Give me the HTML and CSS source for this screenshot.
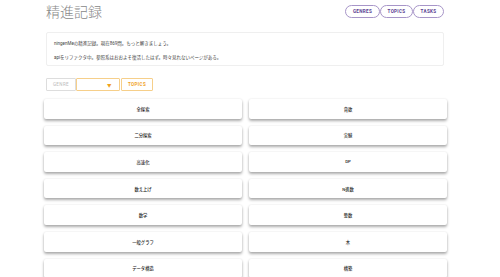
FILE: index.html
```html
<!DOCTYPE html>
<html lang="ja">
<head>
    <meta charset="UTF-8">
    <title>精進記録</title>
    <link rel="stylesheet" href="styles.css">
</head>
<body>

<div class="page">
    <header class="top">
        <h1 class="title">精進記録</h1>
        <nav class="nav">
            <a class="pill">GENRES</a>
            <a class="pill">TOPICS</a>
            <a class="pill">TASKS</a>
        </nav>
    </header>

    <div class="notice">
        <p>ningenMeの精進記録。現在869問。もっと解きましょう。</p>
        <p>apiをリファクタ中。参照系はおおよそ復活したはず。時々見れないページがある。</p>
    </div>

    <div class="filter">
        <span class="tab tab-off">GENRE</span>
        <span class="select"><span class="arrow">&#9660;</span></span>
        <span class="tab tab-on">TOPICS</span>
    </div>

    <div class="cards">
        <div class="card">全探索</div>
        <div class="card">貪欲</div>
        <div class="card">二分探索</div>
        <div class="card">実験</div>
        <div class="card">高速化</div>
        <div class="card">DP</div>
        <div class="card">数え上げ</div>
        <div class="card">N進数</div>
        <div class="card">数学</div>
        <div class="card">整数</div>
        <div class="card">一般グラフ</div>
        <div class="card">木</div>
        <div class="card">データ構造</div>
        <div class="card">構築</div>
    </div>
</div>

</body>
</html>
```

FILE: styles.css
```css
body {
    margin: 0;
    padding: 0;
    background-color: #fff;
    color: #333;
    font-family: Roboto, "Noto Sans CJK JP", sans-serif;
}

.page {
    width: 398px;
    margin-left: 46px;
}

.top {
    display: flex;
    justify-content: space-between;
    align-items: flex-start;
    height: 32px;
}

.title {
    margin: 2px 0 0 0;
    font-size: 14px;
    font-weight: 300;
    color: #888;
    line-height: 20px;
}

.nav {
    display: flex;
    margin-top: 5px;
}

.pill {
    display: flex;
    align-items: center;
    justify-content: center;
    height: 11px;
    padding: 0 5px;
    border: 1px solid #a795c8;
    border-radius: 7px;
    color: #5b3f92;
    font-size: 4.6px;
    font-weight: bold;
    letter-spacing: 0.3px;
}

.pill:nth-child(1) { width: 23px; }
.pill:nth-child(2) { width: 21px; }
.pill:nth-child(3) { width: 19px; }

.notice {
    height: 32px;
    border: 1px solid #efefef;
    border-radius: 2px;
    padding: 0 7px;
    font-size: 4.5px;
    color: #444;
}

.notice p {
    margin: 8px 0 0 0;
    line-height: 6px;
}

.notice p + p {
    margin-top: 8px;
}

.filter {
    display: flex;
    margin-top: 12px;
    height: 13px;
}

.tab, .select {
    display: flex;
    align-items: center;
    justify-content: center;
    box-sizing: border-box;
    height: 13px;
    font-size: 4.5px;
    letter-spacing: 0.4px;
    border-radius: 1px;
}

.tab-off {
    width: 30px;
    border: 1px solid #ddd;
    color: #bbb;
}

.select {
    width: 44px;
    border: 1px solid #f6cf8a;
    justify-content: flex-end;
    padding-right: 7px;
}

.arrow {
    color: #f0a21e;
    font-size: 4.5px;
}

.tab-on {
    width: 32px;
    margin-left: 1px;
    border: 1px solid #f6cf8a;
    color: #f0a21e;
    font-weight: bold;
}

.cards {
    display: grid;
    grid-template-columns: 198px 198px;
    column-gap: 7px;
    row-gap: 7px;
    margin: 8px 0 0 -2px;
}

.card {
    display: flex;
    align-items: center;
    justify-content: center;
    height: 19.6px;
    background-color: #fff;
    border-radius: 2px;
    box-shadow: 0 2px 3px rgba(0, 0, 0, 0.32), 0 0 2px rgba(0, 0, 0, 0.1);
    font-size: 4.3px;
    font-weight: 500;
    color: #222;
}
```
